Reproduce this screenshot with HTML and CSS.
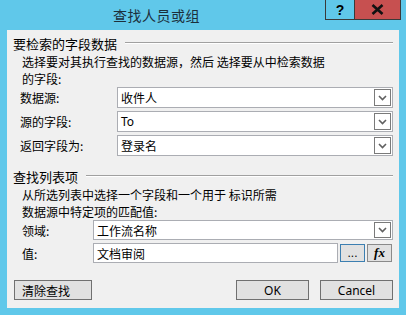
FILE: index.html
```html
<!DOCTYPE html>
<html lang="zh-CN">
<head>
    <meta charset="UTF-8">
    <title>查找人员或组</title>
    <link rel="stylesheet" href="styles.css">
</head>
<body>
    <div class="window">
        <!-- Title bar with caption buttons -->
        <div class="titlebar">
            <div class="title">查找人员或组</div>
            <div class="caption-btn help">?</div>
            <div class="caption-btn close">
                <svg width="13" height="11" viewBox="0 0 13 11"><path d="M1.5 1 L11.5 10 M11.5 1 L1.5 10" stroke="#111" stroke-width="2.6"/></svg>
            </div>
        </div>

        <div class="client">
            <div class="group-head">
                <span>要检索的字段数据</span>
                <div class="rule"></div>
            </div>
            <p class="desc">选择要对其执行查找的数据源，然后 选择要从中检索数据<br>的字段:</p>

            <div class="rows">
                <div class="row">
                    <label>数据源:</label>
                    <div class="select"><span>收件人</span><div class="drop"><svg width="9" height="6" viewBox="0 0 9 6"><path d="M1 1 L4.5 4.5 L8 1" fill="none" stroke="#606060" stroke-width="1.6"/></svg></div></div>
                </div>
                <div class="row">
                    <label>源的字段:</label>
                    <div class="select"><span class="latin">To</span><div class="drop"><svg width="9" height="6" viewBox="0 0 9 6"><path d="M1 1 L4.5 4.5 L8 1" fill="none" stroke="#606060" stroke-width="1.6"/></svg></div></div>
                </div>
                <div class="row">
                    <label>返回字段为:</label>
                    <div class="select"><span>登录名</span><div class="drop"><svg width="9" height="6" viewBox="0 0 9 6"><path d="M1 1 L4.5 4.5 L8 1" fill="none" stroke="#606060" stroke-width="1.6"/></svg></div></div>
                </div>
            </div>

            <div class="group-head second">
                <span>查找列表项</span>
                <div class="rule"></div>
            </div>
            <p class="desc">从所选列表中选择一个字段和一个用于 标识所需<br>数据源中特定项的匹配值:</p>

            <div class="rows narrow">
                <div class="row">
                    <label>领域:</label>
                    <div class="select"><span>工作流名称</span><div class="drop"><svg width="9" height="6" viewBox="0 0 9 6"><path d="M1 1 L4.5 4.5 L8 1" fill="none" stroke="#606060" stroke-width="1.6"/></svg></div></div>
                </div>
                <div class="row">
                    <label>值:</label>
                    <div class="value-box"><span>文档审阅</span></div>
                    <button class="small-btn dots">...</button>
                    <button class="small-btn fx">fx</button>
                </div>
            </div>

            <div class="footer">
                <button class="btn clear">清除查找</button>
                <button class="btn ok">OK</button>
                <button class="btn">Cancel</button>
            </div>
        </div>
    </div>
</body>
</html>
```

FILE: styles.css
```css
body { margin: 0; font-family: "Noto Sans CJK SC", "Noto Sans", sans-serif; font-size: 12px; color: #000; }
.window { width: 406px; height: 315px; background: #60c8ea; display: flex; flex-direction: column; }

.titlebar { height: 30px; display: flex; align-items: flex-start; }
.title { flex: 1; padding-left: 113px; font-size: 14px; line-height: 30px; color: #1c2f3c; letter-spacing: 0.5px; }
.caption-btn { height: 20px; box-sizing: border-box; border: 1px solid #3a3a3a; border-top: none; display: flex; align-items: center; justify-content: center; }
.help { width: 29px; font-family: "Liberation Sans", sans-serif; font-weight: bold; font-size: 14px; border-right: none; }
.close { width: 47px; background: #c75050; margin-right: 5px; }

.client { flex: 1; margin: 0 7px 8px 7px; background: #f0f0f0; padding: 5px 6px 8px 6px; display: flex; flex-direction: column; }

.group-head { display: flex; align-items: center; height: 16px; font-size: 13px; }
.group-head .rule { flex: 1; margin-left: 8px; border-top: 1px solid #a0a0a0; border-bottom: 1px solid #fff; }
.group-head.second { margin-top: 12px; }

.desc { margin: 2px 0 0 9px; line-height: 17px; }

.rows { display: flex; flex-direction: column; gap: 3px; padding-left: 7px; }
.row { display: flex; align-items: center; height: 21px; }
.row label { width: 97px; }
.rows.narrow .row { height: 20px; }
.rows.narrow label { width: 73px; padding-left: 2px; box-sizing: border-box; }

.select { flex: 1; height: 100%; box-sizing: border-box; border: 1px solid #abadb3; background: #fff; display: flex; align-items: center; justify-content: space-between; padding: 0 1px 0 3px; }
.select .latin { font-family: "Noto Sans", sans-serif; }
.drop { width: 17px; height: 17px; box-sizing: border-box; border: 1px solid #7a7a7a; background: #fff; display: flex; align-items: center; justify-content: center; }
.narrow .drop { height: 16px; }

.value-box { width: 245px; height: 100%; box-sizing: border-box; border: 1px solid #abadb3; background: #fff; display: flex; align-items: center; padding-left: 3px; }
.small-btn { width: 25px; height: 18px; margin-left: 2px; box-sizing: border-box; background: #e1e1e1; border: 1px solid #8a8a8a; padding: 0; font-family: "Liberation Sans", sans-serif; font-size: 12px; }
.dots { border-color: #3c7fb1; line-height: 10px; }
.fx { font-family: "Liberation Serif", serif; font-style: italic; font-weight: bold; font-size: 13px; }

.footer { display: flex; margin-top: 17px; padding-left: 1px; }
.btn { height: 20px; width: 73px; box-sizing: border-box; background: #e1e1e1; border: 1px solid #707070; padding: 0; font-family: "Noto Sans", sans-serif; font-size: 12px; }
.btn.clear { width: 78px; text-align: left; padding-left: 7px; font-family: "Noto Sans CJK SC", sans-serif; }
.btn.ok { margin-left: auto; margin-right: 11px; }
```
